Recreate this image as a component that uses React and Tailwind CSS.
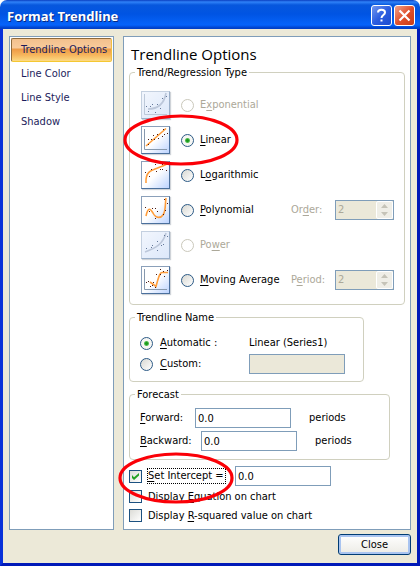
import React from 'react';

const dots = {
  exponential: [[5, 15], [7, 20], [9, 15], [11, 13], [14, 21], [16, 13], [19, 17], [21, 7], [25, 5]],
  linear: [[7, 13], [7, 18], [10, 13], [12, 9], [13, 13], [16, 8], [17, 12], [21, 10], [22, 3], [23, 8], [26, 7]],
  logarithmic: [[4, 11], [8, 15], [10, 8], [14, 3], [15, 10], [19, 8], [21, 3], [21, 8], [25, 9]],
  polynomial: [[4, 11], [8, 15], [11, 12], [14, 12], [14, 22], [16, 15], [22, 18], [23, 3], [24, 14], [26, 7]],
  power: [[5, 17], [10, 16], [11, 14], [16, 10], [16, 19], [20, 14], [22, 13], [23, 4], [26, 5]],
  moving: [[5, 16], [7, 15], [9, 20], [11, 19], [12, 16], [14, 21], [15, 8], [19, 3], [19, 8], [22, 5], [23, 10], [26, 4]],
};

const curves = {
  exponential: 'M7 18 C15 18 23 14 25 2',
  linear: 'M5 20 L25 2.500',
  logarithmic: 'M5 22 C4 7 15 9 26 3',
  polynomial: 'M5 20 C7 11 9 12 12 17 C15 23 20 22 22 19 C25 15 24 8 25 2',
  power: 'M4 21 C15 17 22 13 25 2',
  moving: 'M9 16 L15 20.500 C18 9 19 6.500 21 6.500 L27 6.500',
};

function TrendIcon({ kind, disabled }) {
  const axes = kind === 'exponential' || kind === 'linear' || kind === 'moving';
  const frame = disabled
    ? 'border-[#c4d0e0] border-r-[#9aafc9] border-b-[#9aafc9] from-[#f2f6fd] to-[#dde8fa]'
    : 'border-[#8ba0ba] border-r-[#4a6f9c] border-b-[#4a6f9c] from-white via-white to-[#bcd3ff]';
  return (
    <span className={`block h-7 w-[29px] shrink-0 border bg-linear-to-br shadow-[1px_1px_1px_#cfd3d8] ${frame}`}>
      <svg viewBox="1 1 27 26" width="27" height="26" fill="none" aria-hidden="true">
        {axes && <path d="M3.500 3 V23.500 H26" stroke={disabled ? '#bdc9d9' : '#8799ae'} strokeWidth="1" />}
        <path d={curves[kind]} stroke={disabled ? '#bcc7da' : '#ff9d3b'} strokeWidth="1.600" />
        {dots[kind].map(([x, y]) => (
          <rect key={`${x}-${y}`} x={x} y={y} width="1" height="1" fill={disabled ? '#64789a' : '#4a1a14'} shapeRendering="crispEdges" />
        ))}
      </svg>
    </span>
  );
}

function Radio(props) {
  return (
    <input
      type="radio"
      className="m-0 block size-[13px] shrink-0 appearance-none rounded-full border border-[#2c5a86] bg-[linear-gradient(135deg,#d8d8d2,#ffffff)] checked:bg-[radial-gradient(circle,#1c9a1c_0_1px,#52bd52_2px,#f6f6f3_3px)] disabled:border-[#cac8bb] disabled:bg-white disabled:bg-none"
      {...props}
    />
  );
}

function Checkbox({ id, checked }) {
  return (
    <span className="relative block size-[13px] shrink-0">
      <input
        id={id}
        type="checkbox"
        defaultChecked={checked}
        className="peer m-0 block size-[13px] appearance-none border border-[#1c5180] bg-[linear-gradient(135deg,#dcdcd7,#ffffff)]"
      />
      <svg viewBox="0 0 13 13" className="pointer-events-none absolute inset-0 hidden size-[13px] peer-checked:block" aria-hidden="true">
        <path d="M3 5 V8 L5 10 L10 5.500 V3 L5 7.300 Z" fill="#21a121" />
      </svg>
    </span>
  );
}

const U = ({ children }) => <span className="underline underline-offset-2">{children}</span>;

const textBox = 'block h-5 w-24 border border-[#7f9db9] px-[2px] text-[11px] leading-[18px] outline-none';

function Group({ title, className, children }) {
  return (
    <fieldset className={`min-w-0 rounded-[4px] border border-[#d0d0bf] ${className}`}>
      <legend className="ml-[5px] px-[2px] leading-[13px]">{title}</legend>
      {children}
    </fieldset>
  );
}

function Spinner({ id }) {
  return (
    <span className="flex h-5 w-[59px] border border-[#7f9db9] bg-[#ebe8d9]">
      <input id={id} type="text" defaultValue="2" disabled className="min-w-0 flex-1 px-[2px] text-[#aca899]" />
      <span className="flex w-[17px] flex-col items-center justify-center gap-1 rounded-[2px] border border-white bg-[#efeee7]">
        <svg width="7" height="4" viewBox="0 0 7 4" aria-hidden="true"><path d="M0 4 L3.500 0 L7 4 Z" fill="#c5c3b8" /></svg>
        <svg width="7" height="4" viewBox="0 0 7 4" aria-hidden="true"><path d="M0 0 L3.500 4 L7 0 Z" fill="#c5c3b8" /></svg>
      </span>
    </span>
  );
}

function Ring({ className }) {
  return (
    <svg viewBox="0 0 116 52" preserveAspectRatio="none" className={`pointer-events-none absolute z-10 h-[52px] w-[116px] ${className}`} aria-hidden="true">
      <ellipse cx="58" cy="26" rx="56" ry="24" fill="none" stroke="#fb0007" strokeWidth="3.200" />
    </svg>
  );
}

const trendTypes = [
  { kind: 'exponential', before: 'E', key: 'x', after: 'ponential', disabled: true },
  { kind: 'linear', before: '', key: 'L', after: 'inear', checked: true },
  { kind: 'logarithmic', before: 'L', key: 'o', after: 'garithmic' },
  { kind: 'polynomial', before: '', key: 'P', after: 'olynomial', extra: ['Or', 'd', 'er:'] },
  { kind: 'power', before: 'Po', key: 'w', after: 'er', disabled: true },
  { kind: 'moving', before: '', key: 'M', after: 'oving Average', extra: ['P', 'e', 'riod:'] },
];

function TrendRow({ item }) {
  return (
    <div className="relative flex h-7 items-center">
      <TrendIcon kind={item.kind} disabled={item.disabled} />
      <span className="ml-[11px]">
        <Radio id={item.kind} name="trend" defaultChecked={item.checked} disabled={item.disabled} />
      </span>
      <label htmlFor={item.kind} className={`ml-[6px] w-[91px] whitespace-nowrap ${item.disabled ? 'text-[#aca899]' : ''}`}>
        {item.before}<U>{item.key}</U>{item.after}
      </label>
      {item.extra && (
        <>
          <label htmlFor={`${item.kind}-value`} className="w-11 text-[#aca899]">
            {item.extra[0]}<U>{item.extra[1]}</U>{item.extra[2]}
          </label>
          <Spinner id={`${item.kind}-value`} />
        </>
      )}
      {item.checked && <Ring className="-top-3 -left-[18px]" />}
    </div>
  );
}

const navItem = 'block h-6 w-full rounded-[2px] border pl-[9px] text-left whitespace-nowrap text-[#1c1c5c]';

export default function App() {
  return (
    <div className="flex min-h-screen flex-col bg-white font-['DejaVu_Sans_Condensed','DejaVu_Sans','Noto_Sans',sans-serif] text-[11px] leading-[14px] text-black">
      <header className="flex h-[29px] items-center rounded-t-[7px] bg-[linear-gradient(180deg,#0a3fc0_0,#2f82f8_2px,#0757dd_5px,#0054e3_14px,#0460f4_22px,#0563fb_25px,#0040c8_28px)] pr-[5px] pl-[7px]">
        <h1 className="flex-1 pt-[2px] font-['Noto_Sans',sans-serif] text-[13px] font-bold text-white [text-shadow:1px_1px_0_#0a2a80]">Format Trendline</h1>
        <div className="flex gap-[2px] pt-[2px]">
          <button type="button" aria-label="Help" className="flex size-[21px] items-center justify-center rounded-[3px] border border-white bg-linear-to-br from-[#7396ee] via-[#2c5de0] to-[#1b4bd0]">
            <svg width="13" height="15" viewBox="0 0 13 15" fill="none" aria-hidden="true">
              <path d="M3 4.500 C3 0.800 10 0.800 10 4.500 C10 7 6.500 7 6.500 10" stroke="white" strokeWidth="2" />
              <rect x="5.500" y="11.500" width="2" height="2" fill="white" />
            </svg>
          </button>
          <button type="button" aria-label="Close window" className="flex size-[21px] items-center justify-center rounded-[3px] border border-white bg-linear-to-br from-[#f0a088] via-[#e0502c] to-[#c83c14]">
            <svg width="13" height="13" viewBox="0 0 13 13" aria-hidden="true">
              <path d="M1.500 1.500 L11.500 11.500 M11.500 1.500 L1.500 11.500" stroke="white" strokeWidth="2.200" />
            </svg>
          </button>
        </div>
      </header>

      <div className="flex flex-1 flex-col border-x-[3px] border-b-[3px] border-[#0831d9] border-r-[#0019b8] border-b-[#0019b8] bg-[#ece9d8] px-[6px] pt-[7px] pb-2">
        <div className="flex flex-1 gap-[9px]">
          <nav className="w-[105px] shrink-0 border border-[#7f9db9] bg-white p-px">
            <button type="button" className={`${navItem} border-[#8f6b3c] border-r-[#f0c040] border-b-[#f5c832] bg-[linear-gradient(180deg,#f3c08d_0,#f8cb9b_9px,#ee9a45_10px,#f6b55c_16px,#fde08a_23px)]`}>Trendline Options</button>
            <button type="button" className={`${navItem} border-transparent`}>Line Color</button>
            <button type="button" className={`${navItem} border-transparent`}>Line Style</button>
            <button type="button" className={`${navItem} border-transparent`}>Shadow</button>
          </nav>

          <main className="min-w-0 flex-1 border border-[#7f9db9] bg-white px-[5px] pt-[7px] pb-[7px]">
            <h2 className="mb-[2px] pl-[2px] font-['Open_Sans','Noto_Sans',sans-serif] text-[15px] leading-5">Trendline Options</h2>

            <Group title="Trend/Regression Type" className="pb-[10px]">
              <div className="mt-3 ml-[11px] flex flex-col gap-[7px]">
                {trendTypes.map((item) => <TrendRow key={item.kind} item={item} />)}
              </div>
            </Group>

            <Group title="Trendline Name" className="mt-[6px] w-[235px] pb-[7px]">
              <div className="mt-2 ml-[10px] grid grid-cols-[13px_96px_1fr] items-center">
                <Radio id="auto-name" name="series-name" defaultChecked />
                <label htmlFor="auto-name" className="pl-[7px]"><U>A</U>utomatic :</label>
                <span className="h-[22px] whitespace-nowrap leading-[22px]">Linear (Series1)</span>
                <Radio id="custom-name" name="series-name" />
                <label htmlFor="custom-name" className="pl-[7px]"><U>C</U>ustom:</label>
                <input type="text" disabled aria-label="Custom name" className={`${textBox} bg-[#ebe8d9]`} />
              </div>
            </Group>

            <Group title="Forecast" className="mt-[6px] w-[261px] pb-2">
              <div className="mt-[7px] ml-[10px] flex flex-col gap-[3px]">
                <div className="flex items-center">
                  <label htmlFor="forward" className="w-[55px]"><U>F</U>orward:</label>
                  <input id="forward" type="text" defaultValue="0.0" className={`${textBox} bg-white`} />
                  <span className="ml-[18px]">periods</span>
                </div>
                <div className="flex items-center">
                  <label htmlFor="backward" className="w-[61px]"><U>B</U>ackward:</label>
                  <input id="backward" type="text" defaultValue="0.0" className={`${textBox} bg-white`} />
                  <span className="ml-[18px]">periods</span>
                </div>
              </div>
            </Group>

            <div className="relative mt-[6px] flex items-center">
              <Checkbox id="intercept" checked />
              <label htmlFor="intercept" className="ml-[5px] h-4 w-[79px] border border-dotted border-black whitespace-nowrap"><U>S</U>et Intercept =</label>
              <input type="text" defaultValue="0.0" aria-label="Intercept value" className={`ml-[9px] ${textBox} bg-white`} />
              <Ring className="-top-[14px] -left-[11px]" />
            </div>
            <div className="mt-1 flex flex-col gap-[6px]">
              <div className="flex h-[13px] items-center gap-[6px]">
                <Checkbox id="equation" />
                <label htmlFor="equation">Display <U>E</U>quation on chart</label>
              </div>
              <div className="flex h-[13px] items-center gap-[6px]">
                <Checkbox id="rsquared" />
                <label htmlFor="rsquared">Display <U>R</U>-squared value on chart</label>
              </div>
            </div>
          </main>
        </div>

        <footer className="mt-1 flex justify-end">
          <button type="button" className="h-[21px] w-[73px] rounded-[3px] border border-[#003c74] bg-linear-to-b from-white to-[#ecebe5] shadow-[inset_0_0_0_2px_#a9c4f0]">Close</button>
        </footer>
      </div>
    </div>
  );
}
